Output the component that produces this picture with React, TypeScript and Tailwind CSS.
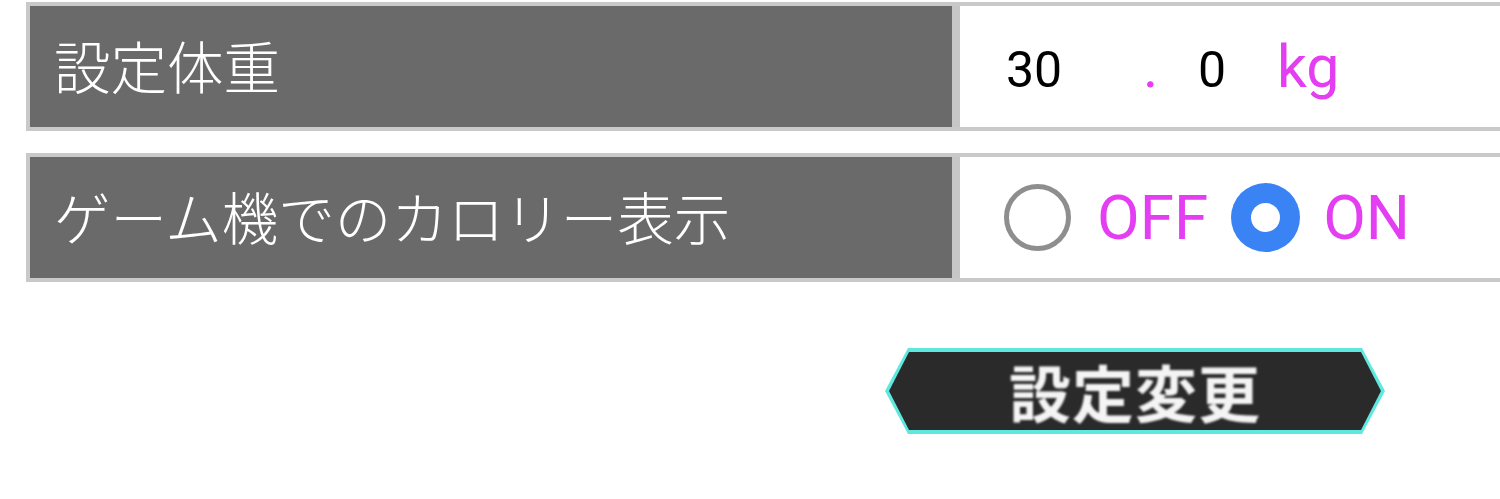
const jp = { fontFamily: '"Noto Sans CJK JP", "Noto Sans", sans-serif' };
const latin = { fontFamily: 'Roboto, "Liberation Sans", Arial, sans-serif' };

function Row({ label, children }: { label: string; children: React.ReactNode }) {
  return (
    <div className="flex h-[129px] w-[1540px] border-[4px] border-r-0 border-[#c9c9c9] bg-[#c6c6c6]">
      <div
        className="flex w-[922px] items-center bg-[#6a6a6a] pb-[4px] pl-[24px] text-[56.5px] font-light text-white"
        style={jp}
      >
        {label}
      </div>
      <div className="ml-[8px] flex flex-1 items-center bg-white" style={latin}>
        {children}
      </div>
    </div>
  );
}

export default function App() {
  return (
    <div className="h-[499px] w-[1500px] overflow-hidden bg-white">
      <div className="flex flex-col gap-[22px] pl-[26px] pt-[2px]">
        <Row label="設定体重">
          <div className="flex items-baseline pl-[46px] leading-none">
            <span className="w-[137px] text-[50px] text-black">30</span>
            <span className="w-[55px] text-[58px] text-[#e43ef2]">.</span>
            <span className="w-[79px] text-[50px] text-black">0</span>
            <span className="text-[59px] text-[#e43ef2]">kg</span>
          </div>
        </Row>
        <Row label="ゲーム機でのカロリー表示">
          <div className="flex items-center pl-[44px] text-[62px] leading-none text-[#e43ef2]">
            <span className="h-[67px] w-[67px] rounded-full border-[5px] border-[#8e8e8e]" />
            <span className="ml-[26px]">OFF</span>
            <span className="ml-[23px] flex h-[69px] w-[69px] items-center justify-center rounded-full bg-[#3a83f5]">
              <span className="h-[29px] w-[29px] rounded-full bg-white" />
            </span>
            <span className="ml-[23px]">ON</span>
          </div>
        </Row>
      </div>
      <div className="pl-[885px] pt-[66px]">
        <div className="h-[86px] w-[500px] bg-[#5fe8df] p-[4px] [clip-path:polygon(23px_0,calc(100%_-_23px)_0,100%_50%,calc(100%_-_23px)_100%,23px_100%,0_50%)]">
          <div
            className="flex h-full w-full items-center justify-center bg-[#2a2a2a] text-[62px] font-bold leading-none text-white [clip-path:polygon(20px_0,calc(100%_-_20px)_0,100%_50%,calc(100%_-_20px)_100%,20px_100%,0_50%)]"
            style={jp}
          >
            <span className="tracking-[1px] text-[#f4f4f4] blur-[1px]">設定変更</span>
          </div>
        </div>
      </div>
    </div>
  );
}
